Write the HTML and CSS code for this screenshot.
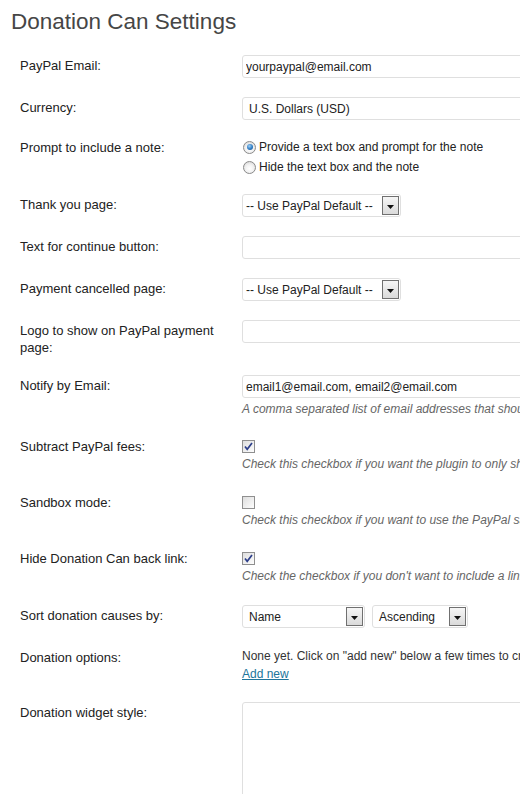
FILE: index.html
```html
<!DOCTYPE html>
<html lang="en">
<head>
<meta charset="utf-8">
<title>Donation Can Settings</title>
<link rel="stylesheet" href="styles.css">
</head>
<body>
<div class="wrap">
  <h2 class="title">Donation Can Settings</h2>
  <div class="form">

    <div class="row">
      <div class="label">PayPal Email:</div>
      <div class="field"><input class="input" type="text" value="yourpaypal@email.com"></div>
    </div>

    <div class="row">
      <div class="label">Currency:</div>
      <div class="field">
        <div class="select wide"><span class="sel-text">U.S. Dollars (USD)</span></div>
      </div>
    </div>

    <div class="row">
      <div class="label flush">Prompt to include a note:</div>
      <div class="field">
        <div class="radios">
          <div class="radio-item"><span class="radio checked"></span><span>Provide a text box and prompt for the note</span></div>
          <div class="radio-item"><span class="radio"></span><span>Hide the text box and the note</span></div>
        </div>
      </div>
    </div>

    <div class="row">
      <div class="label">Thank you page:</div>
      <div class="field">
        <div class="select page"><span class="sel-text">-- Use PayPal Default --</span><span class="arrow"><svg width="7" height="4" viewBox="0 0 7 4"><polygon points="0,0 7,0 3.5,4" fill="#111"/></svg></span></div>
      </div>
    </div>

    <div class="row">
      <div class="label">Text for continue button:</div>
      <div class="field"><input class="input" type="text" value=""></div>
    </div>

    <div class="row">
      <div class="label">Payment cancelled page:</div>
      <div class="field">
        <div class="select page"><span class="sel-text">-- Use PayPal Default --</span><span class="arrow"><svg width="7" height="4" viewBox="0 0 7 4"><polygon points="0,0 7,0 3.5,4" fill="#111"/></svg></span></div>
      </div>
    </div>

    <div class="row">
      <div class="label two">Logo to show on PayPal payment page:</div>
      <div class="field"><input class="input" type="text" value=""></div>
    </div>

    <div class="row">
      <div class="label">Notify by Email:</div>
      <div class="field">
        <input class="input" type="text" value="email1@email.com, email2@email.com">
        <div class="desc gap">A comma separated list of email addresses that should be notified when a new donation is made.</div>
      </div>
    </div>

    <div class="row check">
      <div class="label half">Subtract PayPal fees:</div>
      <div class="field">
        <div class="check-line"><svg class="checkbox" width="13" height="13" viewBox="0 0 13 13"><defs><linearGradient id="cbg1" x1="0" y1="0" x2="1" y2="1"><stop offset="0" stop-color="#dcdcdc"/><stop offset="1" stop-color="#ffffff"/></linearGradient></defs><rect x="0.5" y="0.5" width="12" height="12" fill="url(#cbg1)" stroke="#8f8f8f"/><path d="M3 6.5 L5.2 9.3 L10 3" fill="none" stroke="#2d3f8a" stroke-width="1.7"/></svg></div>
        <div class="desc">Check this checkbox if you want the plugin to only show the amount received after PayPal fees.</div>
      </div>
    </div>

    <div class="row check">
      <div class="label half">Sandbox mode:</div>
      <div class="field">
        <div class="check-line"><svg class="checkbox" width="13" height="13" viewBox="0 0 13 13"><defs><linearGradient id="cbg2" x1="0" y1="0" x2="1" y2="1"><stop offset="0" stop-color="#dcdcdc"/><stop offset="1" stop-color="#ffffff"/></linearGradient></defs><rect x="0.5" y="0.5" width="12" height="12" fill="url(#cbg2)" stroke="#8f8f8f"/></svg></div>
        <div class="desc">Check this checkbox if you want to use the PayPal sandbox for testing your donations.</div>
      </div>
    </div>

    <div class="row check">
      <div class="label half">Hide Donation Can back link:</div>
      <div class="field">
        <div class="check-line"><svg class="checkbox" width="13" height="13" viewBox="0 0 13 13"><defs><linearGradient id="cbg3" x1="0" y1="0" x2="1" y2="1"><stop offset="0" stop-color="#dcdcdc"/><stop offset="1" stop-color="#ffffff"/></linearGradient></defs><rect x="0.5" y="0.5" width="12" height="12" fill="url(#cbg3)" stroke="#8f8f8f"/><path d="M3 6.5 L5.2 9.3 L10 3" fill="none" stroke="#2d3f8a" stroke-width="1.7"/></svg></div>
        <div class="desc">Check the checkbox if you don't want to include a link back to the Donation Can plugin.</div>
      </div>
    </div>

    <div class="row">
      <div class="label">Sort donation causes by:</div>
      <div class="field">
        <div class="select-pair">
          <div class="select name"><span class="sel-text">Name</span><span class="arrow"><svg width="7" height="4" viewBox="0 0 7 4"><polygon points="0,0 7,0 3.5,4" fill="#111"/></svg></span></div>
          <div class="select order"><span class="sel-text">Ascending</span><span class="arrow"><svg width="7" height="4" viewBox="0 0 7 4"><polygon points="0,0 7,0 3.5,4" fill="#111"/></svg></span></div>
        </div>
      </div>
    </div>

    <div class="row">
      <div class="label">Donation options:</div>
      <div class="field">
        <div class="note">None yet. Click on "add new" below a few times to create donation options.</div>
        <div class="note"><a class="link" href="#">Add new</a></div>
      </div>
    </div>

    <div class="row">
      <div class="label">Donation widget style:</div>
      <div class="field"><textarea class="textarea"></textarea></div>
    </div>

  </div>
</div>
</body>
</html>
```
FILE: styles.css
```css
html {
  overflow: hidden;
}

body {
  margin: 0;
  background: #ffffff;
  font-family: "Liberation Sans", Arial, sans-serif;
  color: #333333;
}

.wrap {
  padding: 7px 0 0 11px;
}

.title {
  margin: 0 0 9px 0;
  font-size: 22.5px;
  line-height: 29px;
  font-weight: normal;
  color: #464646;
}

.form {
  padding-left: 9px;
}

.row {
  display: grid;
  grid-template-columns: 222px 1fr;
  padding: 10px 0 9px 0;
}

.row.check {
  padding-bottom: 10px;
}

.label {
  width: 200px;
  font-size: 13px;
  line-height: 18px;
  padding-top: 2px;
  color: #222222;
}

.label.flush {
  padding-top: 0;
}

.label.half {
  padding-top: 1px;
}

.label.two {
  line-height: 17px;
}

.field {
  min-width: 0;
}

.input {
  display: block;
  box-sizing: border-box;
  width: 420px;
  height: 23px;
  margin: 0;
  padding: 0 3px;
  border: 1px solid #dfdfdf;
  border-radius: 3px;
  background: #ffffff;
  font-family: "Liberation Sans", Arial, sans-serif;
  font-size: 12px;
  color: #222222;
  outline: none;
}

.select {
  display: flex;
  align-items: center;
  box-sizing: border-box;
  height: 23px;
  border: 1px solid #dfdfdf;
  border-radius: 3px;
  background: #ffffff;
  font-size: 12px;
  color: #222222;
  padding-left: 6px;
}

.select.wide {
  width: 420px;
}

.select.page {
  width: 159px;
  padding-left: 3px;
}

.select.name {
  width: 123px;
}

.select.order {
  width: 96px;
}

.sel-text {
  white-space: nowrap;
}

.arrow {
  margin-left: auto;
  margin-right: 1px;
  box-sizing: border-box;
  width: 17px;
  height: 19px;
  border: 1px solid #707070;
  background: linear-gradient(#f6f6f6, #dadada);
  display: flex;
  align-items: center;
  justify-content: center;
  padding-top: 2px;
}

.arrow svg {
  display: block;
}

.select-pair {
  display: flex;
  gap: 7px;
}

.radios {
  margin: -2px 0 -2px 0;
  font-size: 12px;
  line-height: 20px;
  color: #222222;
}

.radio-item {
  display: flex;
  align-items: center;
  gap: 3px;
  white-space: nowrap;
}

.radio {
  box-sizing: border-box;
  width: 13px;
  height: 13px;
  margin-left: 1px;
  border-radius: 50%;
  border: 1px solid #8a8a8a;
  background: radial-gradient(circle at 50% 60%, #ffffff 0%, #f2f2f2 45%, #cfcfcf 100%);
  display: flex;
  align-items: center;
  justify-content: center;
}

.radio.checked::after {
  content: "";
  width: 6px;
  height: 6px;
  border-radius: 50%;
  background: radial-gradient(circle at 40% 35%, #9fd0f5 0%, #2f7cc4 55%, #174f8c 100%);
}

.check-line {
  box-sizing: border-box;
  height: 18px;
  padding-top: 3px;
}

.checkbox {
  display: block;
}

.desc {
  font-size: 12px;
  line-height: 18px;
  font-style: italic;
  color: #666666;
  white-space: nowrap;
}

.desc.gap {
  margin-top: 2px;
}

.note {
  font-size: 12px;
  line-height: 18px;
  color: #333333;
  white-space: nowrap;
}

.link {
  color: #21759b;
  text-decoration: underline;
}

.textarea {
  display: block;
  box-sizing: border-box;
  width: 420px;
  height: 160px;
  margin: 0;
  border: 1px solid #dfdfdf;
  border-radius: 3px;
  background: #ffffff;
  resize: none;
}
```
